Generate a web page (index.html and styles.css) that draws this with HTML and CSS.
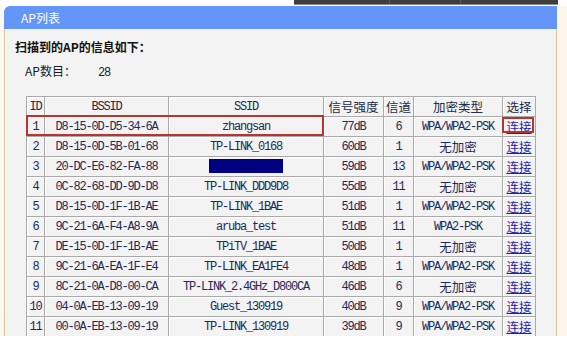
FILE: index.html
```html
<!DOCTYPE html>
<html lang="zh-CN">
<head>
<meta charset="utf-8">
<title>AP列表</title>
<link rel="stylesheet" href="styles.css">
</head>
<body>
<div class="topbar">
  <div class="strip"><span class="seg s1"></span><span class="seg s2"></span><span class="seg s3"></span></div>
</div>
<div class="page">
  <div class="gutter-left"></div>
  <div class="panel">
    <div class="panel-head">AP列表</div>
    <div class="panel-body">
      <div class="title">扫描到的AP的信息如下：</div>
      <div class="count">AP数目：<span class="count-num">28</span></div>
      <div class="table-wrap">
        <table class="ap-table">
          <colgroup>
            <col class="c-id"><col class="c-bssid"><col class="c-ssid"><col class="c-sig"><col class="c-ch"><col class="c-enc"><col class="c-sel">
          </colgroup>
          <thead>
            <tr><th>ID</th><th>BSSID</th><th>SSID</th><th class="zh">信号强度</th><th class="zh">信道</th><th class="zh">加密类型</th><th class="zh">选择</th></tr>
          </thead>
          <tbody>
            <tr><td>1</td><td>D8-15-0D-D5-34-6A</td><td>zhangsan</td><td>77dB</td><td>6</td><td>WPA/WPA2-PSK</td><td><a class="zh link" href="#">连接</a></td></tr>
            <tr><td>2</td><td>D8-15-0D-5B-01-68</td><td>TP-LINK_0168</td><td>60dB</td><td>1</td><td class="zh">无加密</td><td><a class="zh link" href="#">连接</a></td></tr>
            <tr><td>3</td><td>20-DC-E6-82-FA-88</td><td><span class="redact"></span></td><td>59dB</td><td>13</td><td>WPA/WPA2-PSK</td><td><a class="zh link" href="#">连接</a></td></tr>
            <tr><td>4</td><td>0C-82-68-DD-9D-D8</td><td>TP-LINK_DDD9D8</td><td>55dB</td><td>11</td><td class="zh">无加密</td><td><a class="zh link" href="#">连接</a></td></tr>
            <tr><td>5</td><td>D8-15-0D-1F-1B-AE</td><td>TP-LINK_1BAE</td><td>51dB</td><td>1</td><td>WPA/WPA2-PSK</td><td><a class="zh link" href="#">连接</a></td></tr>
            <tr><td>6</td><td>9C-21-6A-F4-A8-9A</td><td>aruba_test</td><td>51dB</td><td>11</td><td>WPA2-PSK</td><td><a class="zh link" href="#">连接</a></td></tr>
            <tr><td>7</td><td>DE-15-0D-1F-1B-AE</td><td>TPiTV_1BAE</td><td>50dB</td><td>1</td><td class="zh">无加密</td><td><a class="zh link" href="#">连接</a></td></tr>
            <tr><td>8</td><td>9C-21-6A-EA-1F-E4</td><td>TP-LINK_EA1FE4</td><td>48dB</td><td>1</td><td>WPA/WPA2-PSK</td><td><a class="zh link" href="#">连接</a></td></tr>
            <tr><td>9</td><td>8C-21-0A-D8-00-CA</td><td>TP-LINK_2.4GHz_D800CA</td><td>46dB</td><td>6</td><td class="zh">无加密</td><td><a class="zh link" href="#">连接</a></td></tr>
            <tr><td>10</td><td>04-0A-EB-13-09-19</td><td>Guest_130919</td><td>40dB</td><td>9</td><td>WPA/WPA2-PSK</td><td><a class="zh link" href="#">连接</a></td></tr>
            <tr><td>11</td><td>00-0A-EB-13-09-19</td><td>TP-LINK_130919</td><td>39dB</td><td>9</td><td>WPA/WPA2-PSK</td><td><a class="zh link" href="#">连接</a></td></tr>
            <tr class="row-cut"><td></td><td></td><td></td><td></td><td></td><td></td><td></td></tr>
          </tbody>
        </table>
        <div class="mark mark-row"></div>
        <div class="mark mark-link"></div>
      </div>
    </div>
  </div>
  <div class="gutter-right"></div>
</div>
<div class="footer"></div>
</body>
</html>
```
FILE: styles.css
```css
html, body {
  margin: 0;
  padding: 0;
}
body {
  width: 567px;
  height: 347px;
  overflow: hidden;
  background: #ffffff;
  font-family: "Noto Sans CJK SC", "Liberation Sans", sans-serif;
}
.topbar {
  height: 6px;
  background: #ffffff;
}
.strip {
  margin-left: 294px;
  width: 264px;
  height: 5px;
  display: flex;
  background: #3e3e3e;
  border-bottom: 1px solid #8a8a8a;
  box-sizing: border-box;
}
.seg {
  height: 100%;
  box-sizing: border-box;
  border-right: 1px solid #5a5a5a;
}
.s1 { width: 96px; }
.s2 { width: 71px; }
.s3 { flex: 1; border-right: 0; }

.page {
  display: flex;
  height: 330px;
}
.gutter-left {
  width: 4px;
  background: #fbf8f2;
}
.gutter-right {
  flex: 1;
  background: #fdf6ea;
}
.panel {
  width: 553px;
  display: flex;
  flex-direction: column;
}
.panel-head {
  height: 23px;
  background: #6496fa;
  border-top-left-radius: 6px;
  color: #ffffff;
  font-size: 12px;
  line-height: 23px;
  padding-left: 17px;
}
.panel-body {
  flex: 1;
  overflow: hidden;
  background: #f3f3f3;
  border-left: 1px solid #e3c393;
  border-right: 1px solid #e3c393;
  padding-left: 10px;
}
.title {
  margin-top: 10px;
  height: 16px;
  line-height: 16px;
  font-size: 12px;
  font-weight: bold;
  color: #111111;
}
.count {
  margin-top: 8px;
  margin-left: 10px;
  height: 16px;
  line-height: 16px;
  font-size: 12px;
  color: #1a1a2a;
}
.count-num {
  margin-left: 22px;
  font-family: "Liberation Mono", monospace;
  font-size: 12px;
  letter-spacing: -1px;
}
.table-wrap {
  position: relative;
  margin-top: 17px;
  margin-left: 11px;
  width: 510px;
}
.ap-table {
  border-collapse: collapse;
  table-layout: fixed;
  width: 509px;
  font-family: "Liberation Mono", "Noto Sans CJK SC", monospace;
  font-size: 12px;
  letter-spacing: -1.2px;
  color: #1c2a5a;
}
.c-id { width: 18px; }
.c-bssid { width: 124px; }
.c-ssid { width: 155px; }
.c-sig { width: 60px; }
.c-ch { width: 30px; }
.c-enc { width: 89px; }
.c-sel { width: 33px; }

.ap-table th,
.ap-table td {
  border: 1px solid #a9a9a9;
  box-shadow: inset 1px 1px 0 #ffffff;
  text-align: center;
  padding: 0;
  white-space: nowrap;
  overflow: hidden;
}
.ap-table th {
  height: 17px;
  font-weight: normal;
  color: #222a44;
}
.ap-table td {
  height: 19px;
}
.ap-table .zh {
  font-family: "Noto Sans CJK SC", sans-serif;
  letter-spacing: 0;
  font-size: 12.5px;
}
.link {
  color: #1f1fa3;
  text-decoration: underline;
}
.redact {
  display: inline-block;
  width: 74px;
  height: 14px;
  background: #000080;
  vertical-align: middle;
}
.mark {
  position: absolute;
  border: 2px solid #b8342e;
  box-sizing: border-box;
  pointer-events: none;
}
.mark-row {
  left: 0;
  top: 19px;
  width: 298px;
  height: 21px;
}
.mark-link {
  left: 476px;
  top: 21px;
  width: 32px;
  height: 16px;
}
.footer {
  height: 11px;
  background: #ffffff;
}
```
